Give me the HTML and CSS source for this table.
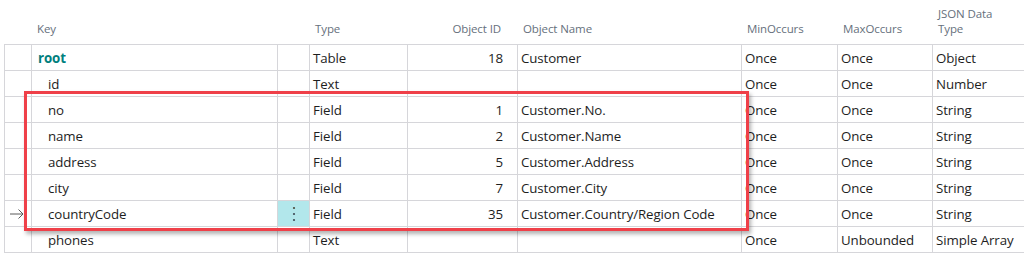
FILE: index.html
```html
<!DOCTYPE html>
<html>
<head>
<meta charset="utf-8">
<link rel="stylesheet" href="styles.css">
</head>
<body>
<div class="page">
  <div class="grid">
    <div class="row head">
      <div class="c"></div>
      <div class="c pad-h">Key</div>
      <div class="c"></div>
      <div class="c pad-h">Type</div>
      <div class="c pad-h num">Object ID</div>
      <div class="c pad-h">Object Name</div>
      <div class="c pad-h">MinOccurs</div>
      <div class="c pad-h">MaxOccurs</div>
      <div class="c pad-h">JSON Data<br>Type</div>
    </div>
    <div class="body">
      <div class="row">
        <div class="c"></div>
        <div class="c key root">root</div>
        <div class="c"></div>
        <div class="c t">Table</div>
        <div class="c t num">18</div>
        <div class="c t">Customer</div>
        <div class="c t">Once</div>
        <div class="c t">Once</div>
        <div class="c t">Object</div>
      </div>
      <div class="row">
        <div class="c"></div>
        <div class="c key sub">id</div>
        <div class="c"></div>
        <div class="c t">Text</div>
        <div class="c t num"></div>
        <div class="c t"></div>
        <div class="c t">Once</div>
        <div class="c t">Once</div>
        <div class="c t">Number</div>
      </div>
      <div class="row">
        <div class="c"></div>
        <div class="c key sub">no</div>
        <div class="c"></div>
        <div class="c t">Field</div>
        <div class="c t num">1</div>
        <div class="c t">Customer.No.</div>
        <div class="c t">Once</div>
        <div class="c t">Once</div>
        <div class="c t">String</div>
      </div>
      <div class="row">
        <div class="c"></div>
        <div class="c key sub">name</div>
        <div class="c"></div>
        <div class="c t">Field</div>
        <div class="c t num">2</div>
        <div class="c t">Customer.Name</div>
        <div class="c t">Once</div>
        <div class="c t">Once</div>
        <div class="c t">String</div>
      </div>
      <div class="row">
        <div class="c"></div>
        <div class="c key sub">address</div>
        <div class="c"></div>
        <div class="c t">Field</div>
        <div class="c t num">5</div>
        <div class="c t">Customer.Address</div>
        <div class="c t">Once</div>
        <div class="c t">Once</div>
        <div class="c t">String</div>
      </div>
      <div class="row">
        <div class="c"></div>
        <div class="c key sub">city</div>
        <div class="c"></div>
        <div class="c t">Field</div>
        <div class="c t num">7</div>
        <div class="c t">Customer.City</div>
        <div class="c t">Once</div>
        <div class="c t">Once</div>
        <div class="c t">String</div>
      </div>
      <div class="row">
        <div class="c arrow-cell">
          <svg width="14" height="10" viewBox="0 0 14 10"><path d="M0 5H13M8.5 0.5L13 5L8.5 9.5" fill="none" stroke="#5a5a5a" stroke-width="1"/></svg>
        </div>
        <div class="c key sub">countryCode</div>
        <div class="c dots-cell">
          <svg width="4" height="16" viewBox="0 0 4 16"><circle cx="2" cy="2" r="1.1" fill="#4a4a3c"/><circle cx="2" cy="8" r="1.1" fill="#3f4a55"/><circle cx="2" cy="14" r="1.1" fill="#3f4a55"/></svg>
        </div>
        <div class="c t">Field</div>
        <div class="c t num">35</div>
        <div class="c t">Customer.Country/Region Code</div>
        <div class="c t">Once</div>
        <div class="c t">Once</div>
        <div class="c t">String</div>
      </div>
      <div class="row">
        <div class="c"></div>
        <div class="c key sub">phones</div>
        <div class="c"></div>
        <div class="c t">Text</div>
        <div class="c t num"></div>
        <div class="c t"></div>
        <div class="c t">Once</div>
        <div class="c t">Unbounded</div>
        <div class="c t">Simple Array</div>
      </div>
    </div>
  </div>
  <div class="highlight"></div>
</div>
</body>
</html>
```

FILE: styles.css
```css
*, *::before, *::after {
  box-sizing: border-box;
}
html, body {
  margin: 0;
  padding: 0;
  background: #ffffff;
}
.page {
  position: relative;
  width: 1024px;
  height: 257px;
  overflow: hidden;
  font-family: "Open Sans", "Noto Sans", sans-serif;
  color: #1e1e1e;
}
.grid {
  margin-left: 4px;
  width: 1020px;
}
.row {
  display: grid;
  grid-template-columns: 27px 246px 32px 98px 110px 224px 96px 95px 92px;
}
.head {
  height: 44px;
  align-items: end;
}
.head .c {
  font-size: 11.5px;
  line-height: 15px;
  color: #66707c;
  padding-bottom: 8px;
  letter-spacing: -0.1px;
}
.head .pad-h {
  padding-left: 6px;
}
.head .num {
  text-align: right;
  padding-left: 0;
  padding-right: 16px;
}
.body {
  border-top: 1px solid #d6d6da;
}
.body .row {
  height: 26px;
  border-bottom: 1px solid #d6d6da;
}
.body .c {
  border-left: 1px solid #d6d6da;
  font-size: 13.3px;
  line-height: 23px;
  padding-top: 2px;
  white-space: nowrap;
  overflow: hidden;
  letter-spacing: -0.1px;
}
.body .t {
  padding-left: 3px;
}
.body .num {
  text-align: right;
  padding-left: 0;
  padding-right: 14px;
}
.key.root {
  padding-left: 6px;
  font-weight: 700;
  color: #00807e;
}
.key.sub {
  padding-left: 16px;
}
.body .arrow-cell {
  display: flex;
  align-items: center;
  padding-left: 5px;
  padding-top: 0;
}
.body .dots-cell {
  background: #b2e7eb;
  display: flex;
  align-items: center;
  justify-content: center;
  padding-top: 0;
}
.highlight {
  position: absolute;
  left: 24px;
  top: 91px;
  width: 725px;
  height: 140px;
  border: 3px solid #ef4049;
  box-shadow: 2px 3px 4px rgba(0, 0, 0, 0.3);
  pointer-events: none;
}
```
